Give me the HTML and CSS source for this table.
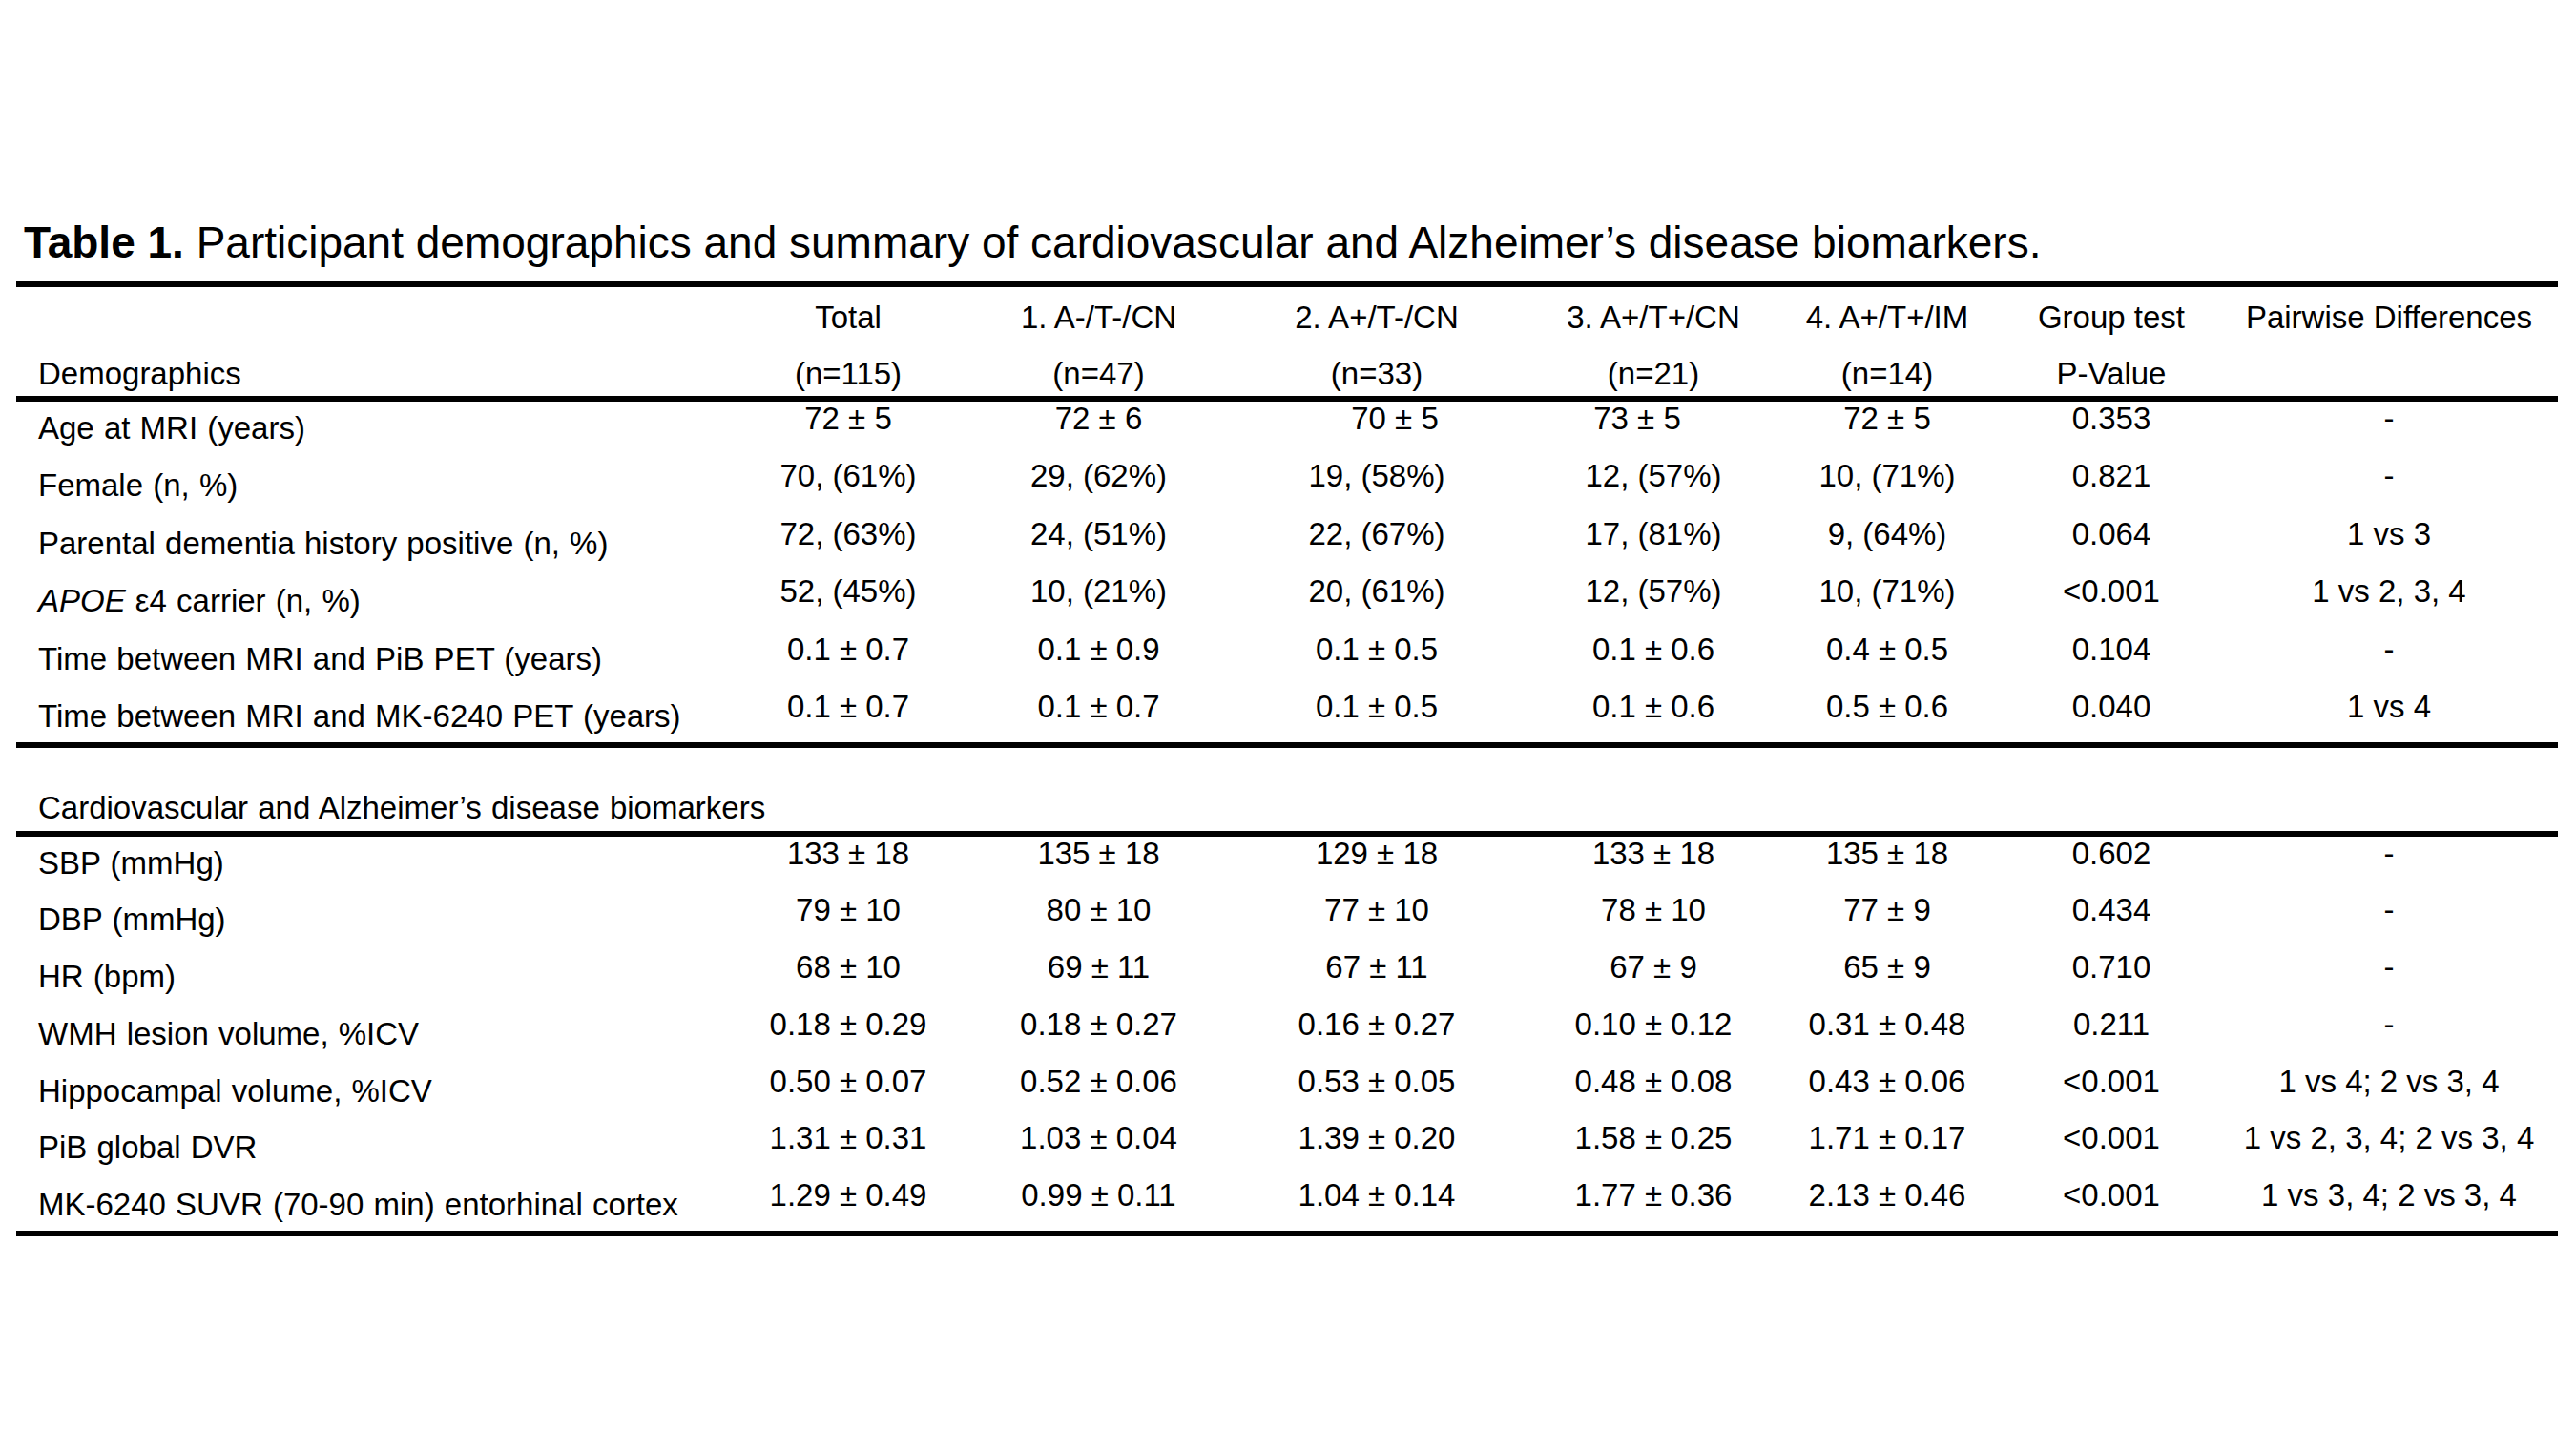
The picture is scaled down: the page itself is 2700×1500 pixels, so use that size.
FILE: index.html
```html
<!DOCTYPE html>
<html>
<head>
<meta charset="utf-8">
<link rel="stylesheet" href="styles.css">
</head>
<body>
<div class="page">
  <div class="title"><b>Table 1.</b> Participant demographics and summary of cardiovascular and Alzheimer’s disease biomarkers.</div>
  <div class="rule"></div>
  <div class="head">
    <div class="row hrow1">
      <div class="label"></div>
      <div class="c">Total</div>
      <div class="c">1. A-/T-/CN</div>
      <div class="c">2. A+/T-/CN</div>
      <div class="c">3. A+/T+/CN</div>
      <div class="c">4. A+/T+/IM</div>
      <div class="c">Group test</div>
      <div class="c">Pairwise Differences</div>
    </div>
    <div class="row hrow2">
      <div class="label flat">Demographics</div>
      <div class="c">(n=115)</div>
      <div class="c">(n=47)</div>
      <div class="c">(n=33)</div>
      <div class="c">(n=21)</div>
      <div class="c">(n=14)</div>
      <div class="c">P-Value</div>
      <div class="c"></div>
    </div>
  </div>
  <div class="rule"></div>
  <div class="body sec1">
    <div class="row">
      <div class="label">Age at MRI (years)</div>
      <div class="c">72 ± 5</div><div class="c">72 ± 6</div><div class="c sr">70 ± 5</div><div class="c sl">73 ± 5</div><div class="c">72 ± 5</div><div class="c">0.353</div><div class="c">-</div>
    </div>
    <div class="row">
      <div class="label">Female (n, %)</div>
      <div class="c">70, (61%)</div><div class="c">29, (62%)</div><div class="c">19, (58%)</div><div class="c">12, (57%)</div><div class="c">10, (71%)</div><div class="c">0.821</div><div class="c">-</div>
    </div>
    <div class="row">
      <div class="label">Parental dementia history positive (n, %)</div>
      <div class="c">72, (63%)</div><div class="c">24, (51%)</div><div class="c">22, (67%)</div><div class="c">17, (81%)</div><div class="c">9, (64%)</div><div class="c">0.064</div><div class="c">1 vs 3</div>
    </div>
    <div class="row">
      <div class="label"><i>APOE</i> ε4 carrier (n, %)</div>
      <div class="c">52, (45%)</div><div class="c">10, (21%)</div><div class="c">20, (61%)</div><div class="c">12, (57%)</div><div class="c">10, (71%)</div><div class="c">&lt;0.001</div><div class="c">1 vs 2, 3, 4</div>
    </div>
    <div class="row">
      <div class="label">Time between MRI and PiB PET (years)</div>
      <div class="c">0.1 ± 0.7</div><div class="c">0.1 ± 0.9</div><div class="c">0.1 ± 0.5</div><div class="c">0.1 ± 0.6</div><div class="c">0.4 ± 0.5</div><div class="c">0.104</div><div class="c">-</div>
    </div>
    <div class="row">
      <div class="label">Time between MRI and MK-6240 PET (years)</div>
      <div class="c">0.1 ± 0.7</div><div class="c">0.1 ± 0.7</div><div class="c">0.1 ± 0.5</div><div class="c">0.1 ± 0.6</div><div class="c">0.5 ± 0.6</div><div class="c">0.040</div><div class="c">1 vs 4</div>
    </div>
  </div>
  <div class="rule"></div>
  <div class="subhead">Cardiovascular and Alzheimer’s disease biomarkers</div>
  <div class="rule"></div>
  <div class="body sec2">
    <div class="row">
      <div class="label">SBP (mmHg)</div>
      <div class="c">133 ± 18</div><div class="c">135 ± 18</div><div class="c">129 ± 18</div><div class="c">133 ± 18</div><div class="c">135 ± 18</div><div class="c">0.602</div><div class="c">-</div>
    </div>
    <div class="row">
      <div class="label">DBP (mmHg)</div>
      <div class="c">79 ± 10</div><div class="c">80 ± 10</div><div class="c">77 ± 10</div><div class="c">78 ± 10</div><div class="c">77 ± 9</div><div class="c">0.434</div><div class="c">-</div>
    </div>
    <div class="row">
      <div class="label">HR (bpm)</div>
      <div class="c">68 ± 10</div><div class="c">69 ± 11</div><div class="c">67 ± 11</div><div class="c">67 ± 9</div><div class="c">65 ± 9</div><div class="c">0.710</div><div class="c">-</div>
    </div>
    <div class="row">
      <div class="label">WMH lesion volume, %ICV</div>
      <div class="c">0.18 ± 0.29</div><div class="c">0.18 ± 0.27</div><div class="c">0.16 ± 0.27</div><div class="c">0.10 ± 0.12</div><div class="c">0.31 ± 0.48</div><div class="c">0.211</div><div class="c">-</div>
    </div>
    <div class="row">
      <div class="label">Hippocampal volume, %ICV</div>
      <div class="c">0.50 ± 0.07</div><div class="c">0.52 ± 0.06</div><div class="c">0.53 ± 0.05</div><div class="c">0.48 ± 0.08</div><div class="c">0.43 ± 0.06</div><div class="c">&lt;0.001</div><div class="c">1 vs 4; 2 vs 3, 4</div>
    </div>
    <div class="row">
      <div class="label">PiB global DVR</div>
      <div class="c">1.31 ± 0.31</div><div class="c">1.03 ± 0.04</div><div class="c">1.39 ± 0.20</div><div class="c">1.58 ± 0.25</div><div class="c">1.71 ± 0.17</div><div class="c">&lt;0.001</div><div class="c">1 vs 2, 3, 4; 2 vs 3, 4</div>
    </div>
    <div class="row">
      <div class="label">MK-6240 SUVR (70-90 min) entorhinal cortex</div>
      <div class="c">1.29 ± 0.49</div><div class="c">0.99 ± 0.11</div><div class="c">1.04 ± 0.14</div><div class="c">1.77 ± 0.36</div><div class="c">2.13 ± 0.46</div><div class="c">&lt;0.001</div><div class="c">1 vs 3, 4; 2 vs 3, 4</div>
    </div>
  </div>
  <div class="rule"></div>
</div>
</body>
</html>
```
FILE: styles.css
```css
html, body {
  margin: 0;
  padding: 0;
  background: #ffffff;
}
body {
  font-family: "Liberation Sans", Arial, sans-serif;
  color: #000000;
}
.page {
  width: 2664px;
  margin-left: 17px;
  padding-top: 231px;
}
.title {
  margin-left: 8px;
  font-size: 46px;
  line-height: 46px;
  height: 46px;
  margin-bottom: 18px;
  white-space: nowrap;
}
.title b {
  font-weight: bold;
}
.rule {
  height: 6px;
  background: #000000;
}
.row {
  display: grid;
  grid-template-columns: 741.5px 261px 264px 319px 261px 229px 241px 341px 1fr;
  font-size: 33px;
  line-height: 33px;
  white-space: nowrap;
}
.c {
  text-align: center;
}
.c.sr {
  padding-left: 38px;
}
.c.sl {
  padding-right: 34px;
}
.label {
  text-align: left;
  padding-left: 23px;
  padding-top: 10px;
  word-spacing: 1px;
}
.label.flat {
  padding-top: 0;
}
.head {
  padding-top: 15px;
  padding-bottom: 7px;
}
.hrow1 {
  height: 59px;
}
.hrow2 {
  height: 33px;
}
.body {
  padding-top: 0.5px;
}
.sec1 .row {
  height: 60.5px;
}
.sec2 .row {
  height: 59.8px;
}
.body .row:last-child {
  height: 54px;
}
.subhead {
  font-size: 33px;
  line-height: 33px;
  padding: 46px 0 8px 23px;
  word-spacing: 1px;
  white-space: nowrap;
}
```
